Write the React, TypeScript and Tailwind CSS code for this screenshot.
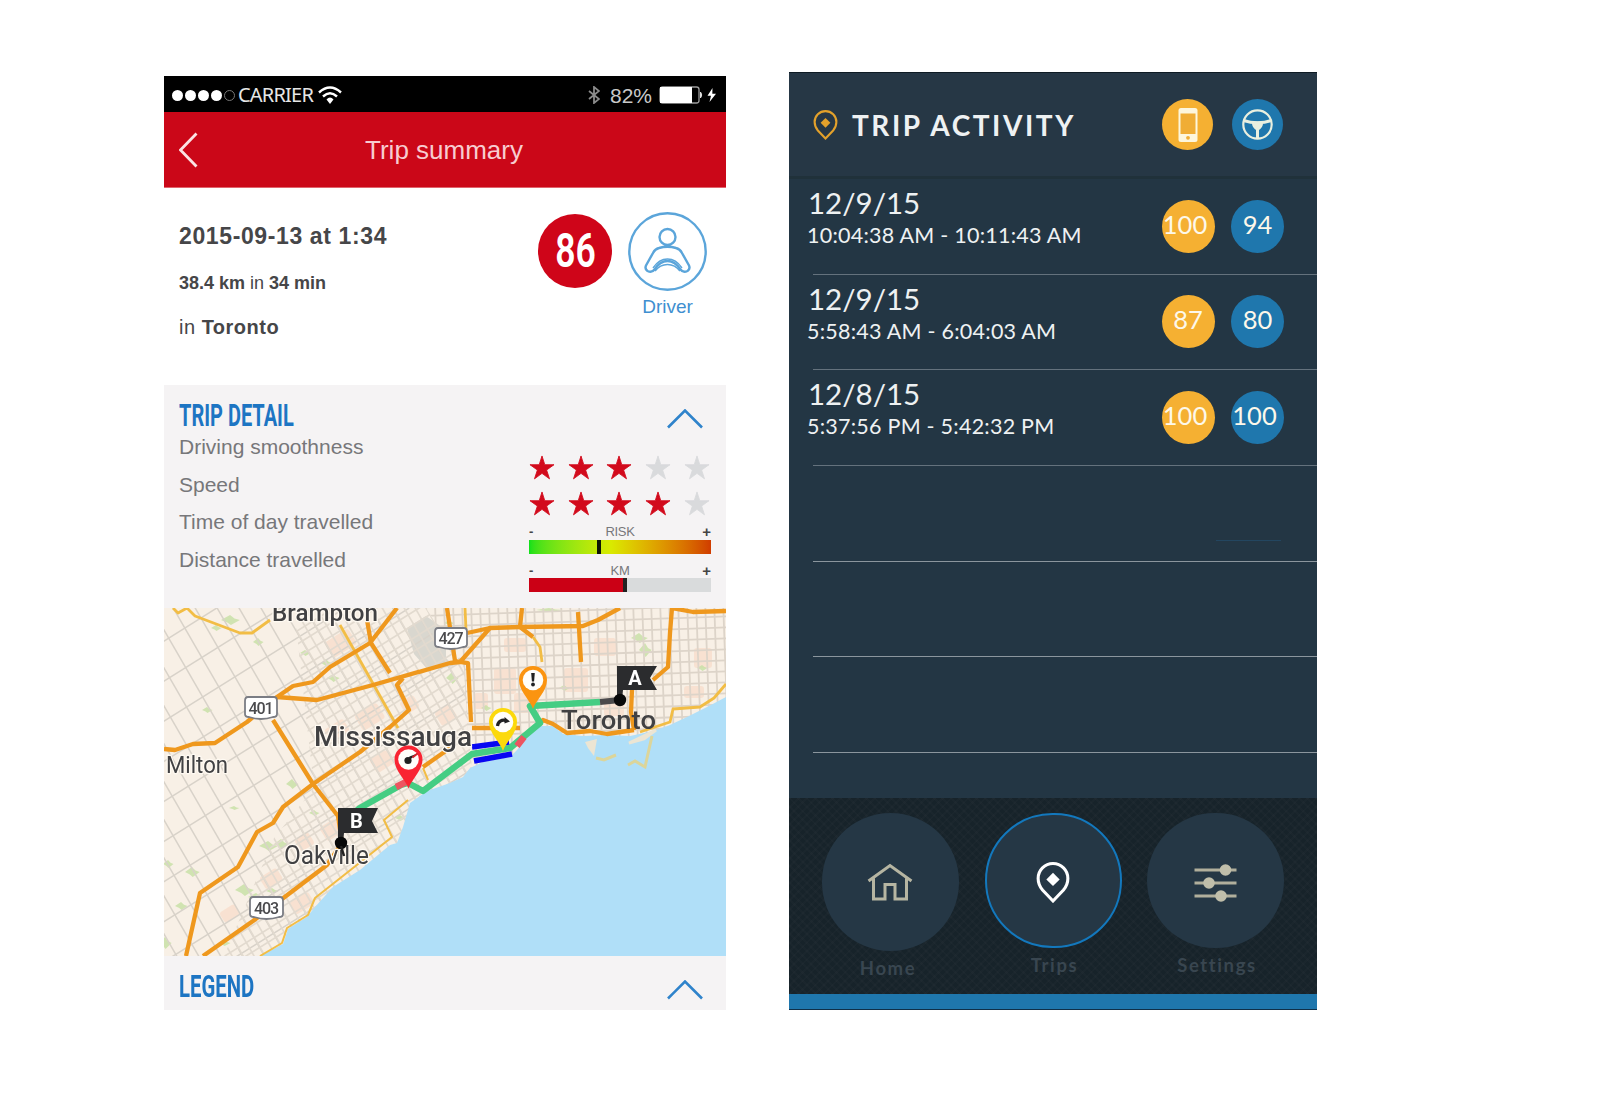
import React from "react";

const STAR = "M13 0.5l2.9 9.1h9.6l-7.7 5.5 3 9.2-7.8-5.7-7.8 5.7 3-9.2L0.5 9.6h9.6z";

function Chevron() {
  return (
    <svg className="h-5 w-9" viewBox="0 0 36 20" fill="none" stroke="#2f83cb" strokeWidth="2.6">
      <path d="M1 18.500L18 1.500L35 18.500" />
    </svg>
  );
}

function Stars({ filled }: { filled: number }) {
  return (
    <div className="flex h-9 items-center gap-[12.700px]">
      {[0, 1, 2, 3, 4].map((i) => {
        const color = i < filled ? "#d20a1c" : "#d9dadc";
        return (
          <svg key={i} className="h-[25px] w-[26px]" viewBox="-0.5 -0.5 27 26">
            <path d={STAR} fill={color} stroke={color} strokeWidth="0.9" strokeLinejoin="round" />
          </svg>
        );
      })}
    </div>
  );
}

function ScaleLabels({ label }: { label: string }) {
  return (
    <div className="flex h-[16px] items-center justify-between text-[13px] leading-none text-[#77777a]">
      <span className="w-3 font-bold text-[#444]">-</span>
      <span className="tracking-[-0.3px]">{label}</span>
      <span className="w-3 text-right text-[15px] font-bold text-[#444]">+</span>
    </div>
  );
}

const range = (a: number, b: number, step: number) => {
  const out: number[] = [];
  for (let v = a; v <= b; v += step) out.push(v);
  return out;
};

const greens: [number, number, number, number][] = [
  [66, 12, 9, 5], [94, 34, 5, 4], [141, 45, 5, 3], [43, 102, 5, 3], [162, 55, 5, 4], [169, 70, 6, 4],
  [104, 238, 9, 5], [117, 236, 7, 5], [80, 282, 9, 6], [92, 289, 8, 4], [108, 283, 6, 3], [4, 256, 5, 4],
  [28, 264, 7, 5], [17, 298, 6, 4], [1, 335, 6, 6], [288, 70, 6, 6], [285, 15, 5, 3], [475, 30, 8, 5],
  [481, 42, 6, 7], [60, 335, 6, 3], [128, 176, 6, 5], [322, 100, 5, 3], [385, 2, 13, 2], [236, 210, 5, 3],
  [150, 205, 5, 3], [52, 20, 5, 3], [70, 200, 5, 2], [400, 80, 5, 3], [538, 60, 5, 3],
];

const blocks: [number, number, number, number][] = [
  [160, 35, 28, 18], [190, 108, 26, 18], [160, 122, 22, 14], [205, 152, 20, 16], [155, 220, 18, 16], [130, 232, 16, 14],
  [95, 270, 20, 14], [125, 295, 22, 14], [55, 305, 18, 12], [330, 60, 22, 26], [350, 85, 20, 20], [400, 60, 24, 24],
  [430, 30, 22, 18], [440, 90, 20, 18], [530, 40, 18, 20], [340, 30, 22, 14], [520, 78, 20, 12], [270, 105, 18, 16],
  [235, 95, 16, 14], [310, 85, 14, 16],
];

function Shield({ x, y, w, h, n }: { x: number; y: number; w: number; h: number; n: string }) {
  return (
    <g>
      <path
        d={`M${x + 3} ${y}H${x + w - 3}Q${x + w} ${y} ${x + w} ${y + 4}V${y + h - 5}Q${x + w} ${y + h - 2} ${x + w - 4} ${y + h - 2}Q${x + w / 2} ${y + h + 2} ${x + 4} ${y + h - 2}Q${x} ${y + h - 2} ${x} ${y + h - 5}V${y + 4}Q${x} ${y} ${x + 3} ${y}z`}
        fill="#fff"
        stroke="#7b7d84"
        strokeWidth="1.8"
      />
      <text x={x + w / 2} y={y + h / 2 + 5.5} textAnchor="middle" fontSize="16" fontWeight="500" textLength="25" fill="#4a4a4d">
        {n}
      </text>
    </g>
  );
}

function MapPin({ x, y, color, children }: { x: number; y: number; color: string; children: React.ReactNode }) {
  return (
    <g transform={`translate(${x} ${y})`}>
      <path d="M0 29C-3 20-14 11-14 0A14 14 0 0 1 14 0C14 11 3 20 0 29z" fill={color} />
      <circle r="10.300" fill="#fffefa" />
      {children}
    </g>
  );
}

function TripMap() {
  const coast =
    "M562 89L543 99L523 109L506 117L489 123L466 128L443 127L419 128L399 126L389 118L376 118L366 125L353 142L346 149L319 154L306 160L299 169L286 175L263 183L246 195L239 219L233 235L226 237L196 262L169 279L151 299L143 309L124 321L119 336L96 348H562z";
  return (
    <svg className="block h-[348px] w-[562px]" viewBox="0 0 562 348" fontFamily='Roboto, "Liberation Sans", sans-serif'>
      <defs>
        <clipPath id="west">
          <path d="M0 0H245L300 60L310 190L200 348H0z" />
        </clipPath>
        <clipPath id="dense">
          <path d="M130 0H262L300 60L310 190L200 348H60L110 230L150 180z" />
        </clipPath>
        <clipPath id="east">
          <path d="M262 0H562V160H306L300 60z" />
        </clipPath>
      </defs>
      <rect width="562" height="348" fill="#f8f0e6" />
      <g fill="#f8ddca" opacity="0.75">
        {blocks.map(([x, y, w, h], i) => (
          <rect key={i} x={x} y={y} width={w} height={h} rx="3" transform={x < 300 ? `rotate(-32 ${x} ${y})` : undefined} />
        ))}
      </g>
      <path d="M243 20L262 8L282 22V50L290 58L264 62L250 46z" fill="#d9d7cf" />
      <g fill="#c6e0a4" opacity="0.8">
        {greens.map(([x, y, a, b], i) => (
          <path key={i} d={`M${x - a} ${y}l${a} ${-b}l${a * 0.5} ${b * 0.7}l${a * 0.6} ${b * 0.3}l${-a} ${b}l${-a * 0.4} ${-b * 0.5}z`} />
        ))}
      </g>
      <g clipPath="url(#west)" stroke="#d8d2c9" strokeWidth="1.5" fill="none">
        <g transform="rotate(-32)">
          {range(-40, 560, 34).map((v) => (
            <path key={v} d={`M-260 ${v}H420`} />
          ))}
        </g>
        <g transform="rotate(-30)">
          {range(-220, 420, 19).map((v) => (
            <path key={v} d={`M${v} -40V560`} />
          ))}
        </g>
      </g>
      <g clipPath="url(#dense)" stroke="#e2dacf" strokeWidth="1.7" fill="none">
        <g transform="rotate(-32)">
          {range(-23, 560, 11.3).map((v) => (
            <path key={v} d={`M-260 ${v}H420`} />
          ))}
        </g>
        <g transform="rotate(-30)">
          {range(-210, 420, 9.5).map((v) => (
            <path key={v} d={`M${v} -40V560`} />
          ))}
        </g>
      </g>
      <g clipPath="url(#east)" stroke="#ddd4c9" strokeWidth="1.8" fill="none">
        <g transform="rotate(-2)">
          {range(-5, 190, 11).map((v) => (
            <path key={v} d={`M250 ${v}H580`} />
          ))}
          {range(262, 575, 9).map((v) => (
            <path key={v} d={`M${v} -10V200`} />
          ))}
        </g>
      </g>
      <path d={coast} fill="#b0dff8" />
      <path d="M421 134L433 131L430 148L424 140z" fill="#ece5d3" />
      <path d="M465 135L492 122L480 131z" stroke="#ece5d3" strokeWidth="3" fill="none" />
      <g fill="none" stroke="#dcd59a" strokeWidth="3">
        <path d="M432 150L440 152L452 147" />
        <path d="M464 157L471 153L481 159L488 128" />
      </g>
      <g fill="none" stroke="#f2bd45" strokeWidth="2.8" strokeLinejoin="round">
        <path d="M9 0L14 5L23 0L31 8L76 25L88 25L106 12" />
        <path d="M176 17L234 120" />
        <path d="M301 0L302 22" />
        <path d="M369 29L376 39L378 54" />
        <path d="M476 124L506 114L509 101L536 99L550 90L562 76" />
        <path d="M244 192L220 212L228 229L189 260L151 290L144 307L123 320L118 335L96 348" strokeWidth="2" />
        <path d="M259 160L264 172" strokeWidth="2" />
      </g>
      <g fill="none" stroke="#ef981d" strokeWidth="4.3" strokeLinejoin="round">
        <path d="M0 141L11 142L29 136L51 135L83 114L113 89L129 78L149 74L166 59L206 35L233 0" />
        <path d="M113 89L153 92L209 77L286 55L296 54L326 20L356 19L419 18L434 12L456 0" />
        <path d="M303 25L326 20" />
        <path d="M283 0L291 53L304 55L307 114" />
        <path d="M203 12L207 35L226 65" />
        <path d="M239 70L233 77L245 102L226 119L196 144L149 176L119 199L109 215L93 224L74 259L36 285L22 348" />
        <path d="M109 112L149 176L174 208L178 235L163 257L89 313L39 348" />
        <path d="M358 0L356 19L369 29" />
        <path d="M414 4L417 54" />
        <path d="M489 72L504 59L506 25L508 0L529 4L562 3" />
        <path d="M468 82L467 104L470 122" />
        <path d="M308 120H356M376 115L379 112L389 116L403 125L426 123L443 126L470 122" />
        <path d="M259 159L286 140" />
      </g>
      <g fill="none" strokeWidth="6.500" strokeLinejoin="round">
        <path d="M180 214L196 200L237 177L244 175L259 183L308 146L346 140L376 115L366 98L436 94" stroke="#45cd83" />
        <path d="M232 179L242 174M353 138L360 129" stroke="#ec5561" />
        <path d="M436 94L456 92" stroke="#4a4a4c" strokeWidth="6" />
        <path d="M308 139L345 134M310 153L348 146" stroke="#0707f2" strokeWidth="5.800" />
      </g>
      <Shield x={81} y={89} w={32} h={22} n="401" />
      <Shield x={271} y={20} w={32} h={21} n="427" />
      <Shield x={86} y={289} w={33} h={22} n="403" />
      <g fill="#414143" stroke="#fffaf2" strokeWidth="2.500" paintOrder="stroke" strokeLinejoin="round" lengthAdjust="spacingAndGlyphs">
        <text x="108" y="13" fontSize="23" fontWeight="500" textLength="106" lengthAdjust="spacingAndGlyphs">Brampton</text>
        <text x="150" y="137.500" fontSize="27" fontWeight="500" textLength="158" lengthAdjust="spacingAndGlyphs">Mississauga</text>
        <text x="2" y="164.500" fontSize="23" textLength="62" lengthAdjust="spacingAndGlyphs">Milton</text>
        <text x="397" y="121" fontSize="26" textLength="95" lengthAdjust="spacingAndGlyphs" stroke="none" fontWeight="500">Toronto</text>
        <text x="120" y="256" fontSize="25" textLength="85" lengthAdjust="spacingAndGlyphs">Oakville</text>
      </g>
      <MapPin x={369} y={72} color="#fb9410">
        <path d="M-1.800 -7h3.600l-0.700 8.500h-2.200z" fill="#222" />
        <circle cy="4.500" r="1.900" fill="#222" />
      </MapPin>
      <MapPin x={339} y={114} color="#fcd90c">
        <path d="M-5.500 4C-5-0.500-1-2.500 2.500-1.500" stroke="#222" strokeWidth="3.200" fill="none" />
        <path d="M1.500-5L7 -0.500L1.500 1.500z" fill="#222" />
      </MapPin>
      <MapPin x={244.5} y={151.5} color="#f92432">
        <circle cx="-0.500" cy="1" r="3.600" fill="#222" />
        <path d="M-2 3L9-6L1-3z" fill="#222" />
        <path d="M4-2L9-6" stroke="#d2242b" strokeWidth="2" />
      </MapPin>
      <g fill="#2b2c2e">
        <path d="M453 58H493L486 70L493 82H459L458 92H453z" />
        <circle cx="456" cy="92" r="6.200" fill="#08090a" />
        <path d="M174 200H214L208 213L214 225H180L179 235H174z" />
        <circle cx="177" cy="235" r="6.200" fill="#08090a" />
      </g>
      <path d="M177 238L180 248" stroke="#222" strokeWidth="2.500" />
      <g fill="#fff" fontWeight="700" fontSize="20" textAnchor="middle">
        <text x="471" y="76.500">A</text>
        <text x="192.500" y="219.500">B</text>
      </g>
    </svg>
  );
}

function TripSummary() {
  return (
    <section className='mt-[76px] ml-[164px] flex h-[934px] w-[562px] shrink-0 flex-col bg-white font-["Liberation_Sans",Arial,sans-serif]'>
      <div className="flex h-[36px] items-center bg-black pt-[2px] pl-[8px] pr-[8px] text-[#e6e6e6]">
        <div className="flex gap-[2px]">
          {[0, 1, 2, 3].map((i) => (
            <span key={i} className="size-[11px] rounded-full bg-white" />
          ))}
          <span className="size-[11px] rounded-full border border-[#777]" />
        </div>
        <span className='ml-[3px] font-["Noto_Sans",sans-serif] text-[20px] leading-none tracking-[-0.800px]'>CARRIER</span>
        <svg className="ml-[5px] h-[19px] w-[24px]" viewBox="0 0 24 19" fill="none" stroke="#fff" strokeWidth="2.400">
          <path d="M1 6.500Q12 -3.500 23 6.500" />
          <path d="M5 10.500Q12 4 19 10.500" />
          <path d="M8.500 13.500Q12 9.500 15.500 13.500L12 18z" fill="#fff" stroke="none" />
        </svg>
        <svg className="ml-auto h-[18px] w-[12px]" viewBox="0 0 12 18" fill="none" stroke="#8b8b8b" strokeWidth="1.800">
          <path d="M1 5L11 13L6 17V1L11 5L1 13" />
        </svg>
        <span className="ml-[10px] text-[21px] leading-none text-[#c9c9c9]">82%</span>
        <svg className="ml-[7px] h-[18px] w-[59px]" viewBox="0 0 59 18">
          <rect x="1" y="1" width="39" height="16" rx="2.500" fill="none" stroke="#9a9a9a" strokeWidth="1.300" />
          <path d="M1 1H33V17H1z" fill="#fff" />
          <path d="M41.500 6Q44 9 41.500 12z" fill="#ddd" stroke="#ddd" />
          <path d="M53.500 2L48.500 9.800H52L50.500 16L57 7.800H53.300z" fill="#fff" />
        </svg>
      </div>

      <header className="grid h-[76px] grid-cols-[1fr_auto_1fr] items-center border-b border-[#e1646d] bg-[#cb0718] pl-[15px] pr-[17px] pt-px">
        <svg className="h-[36px] w-[19px]" viewBox="0 0 19 36" fill="none" stroke="#fbe3e4" strokeWidth="2.800">
          <path d="M17.500 1.500L1.500 18L17.500 34.500" />
        </svg>
        <h1 className="text-[26px] leading-none text-[#f8ccd0]">Trip summary</h1>
      </header>

      <div className="flex h-[197px] justify-between pl-[15px] pr-[19px]">
        <div className="pt-[37px] text-[#464648]">
          <p className="text-[23px] font-bold leading-none tracking-[0.620px]">2015-09-13 at 1:34</p>
          <p className="mt-[26px] text-[18px] font-bold leading-none">
            38.4 km <span className="font-normal">in</span> 34 min
          </p>
          <p className="mt-[25px] text-[20px] font-bold leading-none tracking-[0.500px]">
            <span className="font-normal">in</span> Toronto
          </p>
        </div>
        <div className="flex gap-[16px] pt-[24px]">
          <div className="mt-[2px] flex size-[74px] items-center justify-center rounded-full bg-[#cf0519]">
            <span className="scale-x-[0.740] font-[Roboto,sans-serif] text-[48px] font-semibold leading-none text-white">86</span>
          </div>
          <div className="flex w-[79px] flex-col items-center">
            <svg className="size-[79px]" viewBox="0 0 79 79" fill="none" stroke="#5ba5da" strokeWidth="2.400">
              <circle cx="39.500" cy="39.500" r="38.200" />
              <circle cx="39.500" cy="25" r="8" />
              <path d="M31 36Q39.500 33.500 48 36Q52 37 54 41L61 53.500Q62.500 57 59.500 59Q55 61 52.500 57.500Q47 49 39.500 49Q32 49 26.500 57.500Q24 61 19.500 59Q16.500 57 18 53.500L25 41Q27 37 31 36z" />
              <path d="M27 59Q32 52.500 39.500 52.500Q47 52.500 52 59" strokeWidth="1.600" />
              <path d="M25 56Q31 47 39.500 47Q48 47 54 56" strokeWidth="1.400" />
            </svg>
            <span className="mt-[6px] text-[19px] leading-none text-[#3f8fd0]">Driver</span>
          </div>
        </div>
      </div>

      <div className="flex h-[223px] justify-between bg-[#f5f3f4] pl-[15px] pr-[15px]">
        <div className="text-[21px] leading-[37.500px] text-[#77777a]">
          <h2 className="h-[43px] w-[190px] origin-left scale-x-[0.645] whitespace-nowrap pt-[15px] font-[Roboto,sans-serif] text-[31px] font-bold leading-none text-[#1d75c3]">
            TRIP DETAIL
          </h2>
          <p>Driving smoothness</p>
          <p>Speed</p>
          <p>Time of day travelled</p>
          <p>Distance travelled</p>
        </div>
        <div className="flex w-[182px] flex-col pt-[24px]">
          <div className="mr-[8px] flex h-[40px] justify-end">
            <Chevron />
          </div>
          <Stars filled={3} />
          <Stars filled={4} />
          <div className="mt-[2px]">
            <ScaleLabels label="RISK" />
          </div>
          <div className="mt-[1px] flex h-[14px] bg-linear-to-r from-[#0be01a] via-[#d9ea00] via-45% to-[#d03c00]">
            <span className="ml-[68px] w-[4px] bg-[#0d1405]" />
          </div>
          <div className="mt-[8px]">
            <ScaleLabels label="KM" />
          </div>
          <div className="flex h-[14px] bg-[#d9dbdc]">
            <span className="w-[94px] bg-[#cb0015]" />
            <span className="w-[4px] bg-[#222]" />
          </div>
        </div>
      </div>

      <TripMap />

      <div className="flex h-[54px] justify-between bg-[#f5f3f4] pl-[15px] pr-[23px] pt-[15px]">
        <h2 className="origin-left scale-x-[0.655] font-[Roboto,sans-serif] text-[31px] font-bold leading-none text-[#1d75c3]">LEGEND</h2>
        <div className="pt-[9px]">
          <Chevron />
        </div>
      </div>
    </section>
  );
}

function Pin({ className, color, width }: { className: string; color: string; width: number }) {
  return (
    <svg className={className} viewBox="0 0 32 40" fill="none" stroke={color} strokeWidth={width}>
      <path d="M16 38L5.800 27.300Q1.500 22 1.500 16A14.500 14.500 0 0 1 30.500 16Q30.500 22 26.200 27.300z" />
      <path d="M16 10.500L22.500 17L16 23.500L9.500 17z" fill={color} stroke="none" />
    </svg>
  );
}

const trips: [string, string, number, number][] = [
  ["12/9/15", "10:04:38 AM - 10:11:43 AM", 100, 94],
  ["12/9/15", "5:58:43 AM - 6:04:03 AM", 87, 80],
  ["12/8/15", "5:37:56 PM - 5:42:32 PM", 100, 100],
];

function Score({ value, tone }: { value: number; tone: "phone" | "wheel" }) {
  const bg = tone === "phone" ? "bg-[#f5b032]" : "bg-[#1f77ad]";
  return (
    <span
      className={`flex size-[53px] items-center justify-center rounded-full pb-[3px] text-[25.500px] leading-none text-[#fdf8ea] ${bg} ${value === 100 ? "pr-[6px]" : ""}`}
    >
      {value}
    </span>
  );
}

function NavItem({ label, active, home, children }: { label: string; active?: boolean; home?: boolean; children: React.ReactNode }) {
  return (
    <div className="flex w-[137px] flex-col items-center">
      <div
        className={`flex w-[137px] items-center justify-center rounded-full bg-[#253745] ${home ? "h-[138px]" : "h-[135px]"} ${active ? "border-[2.500px] border-[#1378bd]" : ""}`}
      >
        {children}
      </div>
      <span
        className={`mt-[8px] text-[18.500px] font-bold leading-none tracking-[1.600px] text-[#394650] ${home ? "mr-[5px]" : "ml-[3px]"}`}
      >
        {label}
      </span>
    </div>
  );
}

function TripActivity() {
  return (
    <section className="mt-[72px] ml-[63px] flex h-[938px] w-[528px] shrink-0 flex-col border-t border-[#0e1b24] bg-[#233644] font-[Lato,sans-serif] text-[#eef1f2]">
      <header className="flex h-[106px] items-center border-b-[3px] border-[#20313a] bg-[#263745] pl-[24px] pr-[34px]">
        <Pin className="h-[30px] w-[25px]" color="#e3a12b" width={2.8} />
        <h1 className="ml-[14px] text-[28px] font-bold leading-none tracking-[2.550px]">TRIP ACTIVITY</h1>
        <div className="ml-auto flex gap-[19px]">
          <span className="flex size-[51px] items-center justify-center rounded-full bg-[#f5b032]">
            <svg className="h-[34px] w-[20px]" viewBox="0 0 20 34">
              <rect x="0.500" width="19" height="34" rx="2.500" fill="#fdf6dc" />
              <rect x="2.500" y="5.500" width="15" height="20.500" fill="#f0ad35" />
              <circle cx="10" cy="29.800" r="1.900" fill="#f0ad35" />
            </svg>
          </span>
          <span className="flex size-[51px] items-center justify-center rounded-full bg-[#1f77ad]">
            <svg className="size-[31px]" viewBox="0 0 31 31" fill="none" stroke="#e9efdf">
              <circle cx="15.500" cy="15.500" r="14.200" strokeWidth="2.200" />
              <path d="M1.500 11.500Q15.500 16 29.500 11.500M15.500 18V30" strokeWidth="3" />
              <path d="M10 12.500H21Q21.500 19 15.500 22Q9.500 19 10 12.500z" fill="#e9efdf" stroke="none" />
            </svg>
          </span>
        </div>
      </header>

      <div className="flex flex-1 flex-col">
        {trips.map(([date, time, a, b], i) => (
          <div key={i} className="h-[95.700px]">
            <div className="flex h-[94.700px] justify-between pl-[18px] pr-[33px]">
              <div className="pt-[9px]">
                <p className="pl-px text-[29.500px] leading-[29px]">{date}</p>
                <p className="mt-[7px] whitespace-nowrap text-[21.500px] leading-[22px] tracking-[0.240px]">{time}</p>
              </div>
              <div className="flex gap-[16.500px] pt-[20.500px]">
                <Score value={a} tone="phone" />
                <Score value={b} tone="wheel" />
              </div>
            </div>
            <div className="ml-[24px] h-px bg-[#64727d]" />
          </div>
        ))}
        <div className="flex h-[95.700px] flex-col justify-between">
          <span className="mt-[74px] ml-[427px] h-px w-[65px] bg-[#234660]" />
          <span className="ml-[24px] h-px bg-[#8b969e]" />
        </div>
        <div className="ml-[24px] h-[95.700px] border-b border-[#8b969e]" />
        <div className="ml-[24px] h-[95.700px] border-b border-[#8b969e]" />
      </div>

      <nav className="flex h-[196px] justify-between bg-[#17232a] bg-[repeating-linear-gradient(45deg,#ffffff04_0_2px,transparent_2px_6px),repeating-linear-gradient(-45deg,#ffffff04_0_2px,transparent_2px_6px)] pl-[33px] pr-[33px] pt-[15px]">
        <NavItem label="Home" home>
          <svg className="mr-px h-[38px] w-[46px]" viewBox="0 0 46 38" fill="none" stroke="#b6b5a2" strokeWidth="3">
            <path d="M1.500 18L23 2.500L44.500 18M6.500 15.500V36H18V21.500H28V36H39.500V15.500" />
          </svg>
        </NavItem>
        <NavItem label="Trips" active>
          <Pin className="mt-[4px] mr-px h-[41px] w-[34px]" color="#ffffff" width={3} />
        </NavItem>
        <NavItem label="Settings">
          <svg className="mt-[5px] h-[38px] w-[43px]" viewBox="0 0 43 38" fill="#c0beaa" stroke="#b1af9c" strokeWidth="3">
            <path d="M0.500 6H42.500M0.500 19H42.500M0.500 32H42.500" />
            <g stroke="none">
              <circle cx="31.500" cy="6" r="5.800" />
              <circle cx="15" cy="19" r="5.800" />
              <circle cx="27" cy="32" r="5.800" />
            </g>
          </svg>
        </NavItem>
      </nav>
      <div className="h-[16px] border-b border-[#0f3049] bg-[#1f77ad]" />
    </section>
  );
}

export default function App() {
  return (
    <main className="flex h-[1116px] w-[1600px] items-start overflow-hidden bg-white">
      <TripSummary />
      <TripActivity />
    </main>
  );
}
